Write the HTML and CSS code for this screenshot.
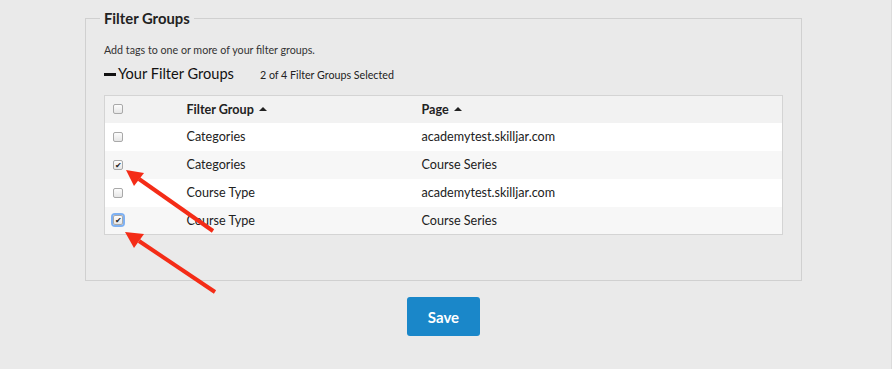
FILE: index.html
```html
<!DOCTYPE html>
<html>
<head>
<meta charset="utf-8">
<link rel="stylesheet" href="styles.css">
</head>
<body>
<div class="page">
  <fieldset class="box">
    <legend class="legend">Filter Groups</legend>
    <p class="hint">Add tags to one or more of your filter groups.</p>
    <div class="subhead">
      <span class="minus"></span>
      <span class="subtitle">Your Filter Groups</span>
      <span class="count">2 of 4 Filter Groups Selected</span>
    </div>
    <table class="grid">
      <thead>
        <tr>
          <th class="c1"><span class="cb"></span></th>
          <th class="c2">Filter Group <span class="sort"></span></th>
          <th class="c3">Page <span class="sort"></span></th>
        </tr>
      </thead>
      <tbody>
        <tr><td class="c1"><span class="cb"></span></td><td class="c2">Categories</td><td class="c3">academytest.skilljar.com</td></tr>
        <tr><td class="c1"><span class="cb on">&#10004;</span></td><td class="c2">Categories</td><td class="c3">Course Series</td></tr>
        <tr><td class="c1"><span class="cb"></span></td><td class="c2">Course Type</td><td class="c3">academytest.skilljar.com</td></tr>
        <tr><td class="c1"><span class="cb on focus">&#10004;</span></td><td class="c2">Course Type</td><td class="c3">Course Series</td></tr>
      </tbody>
    </table>
  </fieldset>
  <div class="actions"><button class="save">Save</button></div>
</div>
<svg class="arrows" width="892" height="369" viewBox="0 0 892 369">
  <line x1="213" y1="231" x2="139" y2="179" stroke="#f42c17" stroke-width="4"/>
  <polygon points="126,170 144,173 134,186" fill="#f42c17"/>
  <line x1="215" y1="292" x2="139" y2="241" stroke="#f42c17" stroke-width="4"/>
  <polygon points="125,232 144,234 134,248" fill="#f42c17"/>
</svg>
</body>
</html>
```

FILE: styles.css
```css
html, body {
  margin: 0;
  padding: 0;
  background: #eaeaea;
  font-family: Lato, "Open Sans", sans-serif;
  color: #222;
}
body {
  width: 892px;
  height: 369px;
  position: relative;
  overflow: hidden;
  border-right: 1px solid #dcdcdc;
  box-sizing: border-box;
}
.page {
  width: 717px;
  margin-left: 85px;
  padding-top: 8px;
}
.box {
  margin: 0;
  border: 1px solid #d0d0d0;
  padding: 0 18px 45px 18px;
  min-width: 0;
}
.legend {
  font-size: 14.8px;
  font-weight: 700;
  line-height: 20px;
  padding: 0 4px;
  margin-left: -4px;
  color: #222;
}
.hint {
  margin: 15px 0 0 0;
  font-size: 10.7px;
  line-height: 14px;
  color: #333;
}
.subhead {
  display: flex;
  align-items: center;
  height: 20px;
  margin-top: 7px;
}
.minus {
  width: 12px;
  height: 3px;
  background: #111;
  margin-right: 2px;
}
.subtitle {
  font-size: 14.6px;
  line-height: 20px;
  color: #111;
}
.count {
  font-size: 10.7px;
  margin-left: 26px;
  color: #222;
}
.grid {
  margin-top: 11px;
  width: 679px;
  border-collapse: collapse;
  border: 1px solid #d4d4d4;
  font-size: 12.6px;
}
.grid th, .grid td {
  padding: 0;
  text-align: left;
  vertical-align: middle;
}
.grid thead tr {
  height: 27px;
  background: #f2f2f2;
}
.grid th {
  font-weight: 700;
}
.grid tbody tr {
  height: 28px;
  background: #fff;
}
.grid tbody tr:nth-child(even) {
  background: #f7f7f7;
}
.c1 {
  width: 82px;
  padding-left: 8px !important;
  box-sizing: border-box;
}
.c2 {
  width: 235px;
}
.cb {
  display: block;
  width: 10px;
  height: 10px;
  box-sizing: border-box;
  border: 1px solid #a9a9a9;
  border-radius: 2px;
  background: linear-gradient(#fdfdfd, #e6e6e6);
  font-size: 8px;
  line-height: 8px;
  text-align: center;
  color: #222;
  overflow: visible;
}
.cb.focus {
  box-shadow: 0 0 0 2px #7fb1f2;
}
.sort {
  display: inline-block;
  width: 0;
  height: 0;
  border-left: 4px solid transparent;
  border-right: 4px solid transparent;
  border-bottom: 4px solid #222;
  margin-left: 2px;
  vertical-align: 3px;
}
.actions {
  display: flex;
  justify-content: center;
  margin-top: 16px;
}
.save {
  width: 73px;
  height: 39px;
  border: none;
  border-radius: 3px;
  background: #1a87c9;
  color: #fff;
  font-family: Lato, sans-serif;
  font-weight: 700;
  font-size: 15px;
  padding: 0;
}
.arrows {
  position: absolute;
  left: 0;
  top: 0;
  pointer-events: none;
}
```
